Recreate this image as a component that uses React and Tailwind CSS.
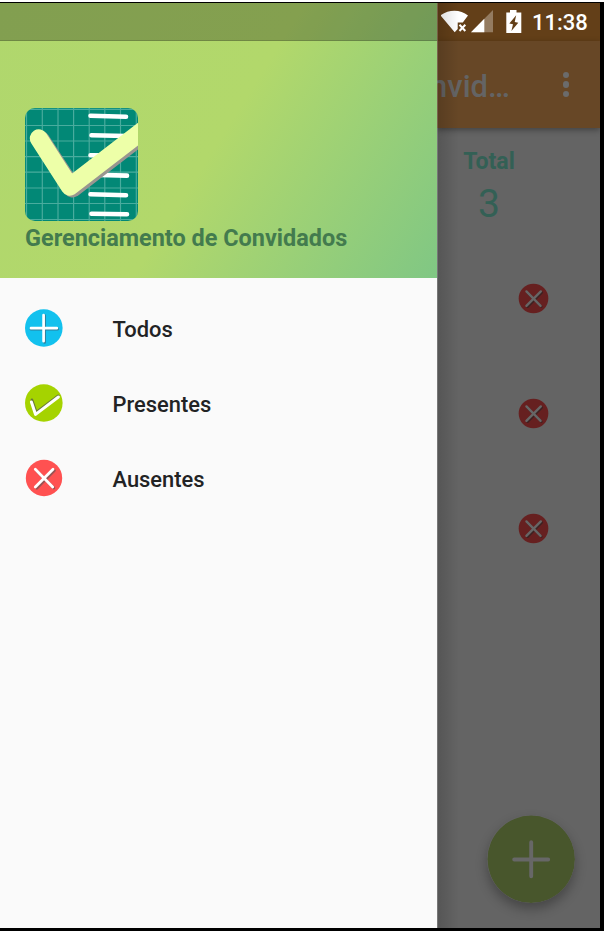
const CloseBadge = ({ className }) => (
  <svg viewBox="0 0 38 38" className={className}>
    <circle cx="19" cy="19" r="18.2" fill="#ff5151" />
    <path d="M11 11.3 28 28.3M28.6 10.8 11 28.4" stroke="#555" strokeOpacity=".6" strokeWidth="2.8" strokeLinecap="round" transform="translate(.8 .8)" />
    <path d="M10.3 10.3 27.7 28M28 10.3 10.3 28" stroke="#fff" strokeWidth="2.8" strokeLinecap="round" />
  </svg>
);

const PlusBadge = () => (
  <svg viewBox="0 0 38 38" className="size-[38px]">
    <circle cx="18.8" cy="19" r="18.8" fill="#12c1ee" />
    <path d="M19.6 6.6V33.4M6 20.2H32.6" stroke="#456" strokeOpacity=".6" strokeWidth="2.7" strokeLinecap="round" />
    <path d="M18.6 6V32.2M6 19.2H31.8" stroke="#fff" strokeWidth="2.7" strokeLinecap="round" />
  </svg>
);

const CheckBadge = () => (
  <svg viewBox="0 0 38 38" className="size-[38px]">
    <circle cx="18.8" cy="19" r="18.8" fill="#a5d300" />
    <path d="M7 15.8 11.3 28.3 33.2 11.8" fill="none" stroke="#58634a" strokeOpacity=".8" strokeWidth="2.6" strokeLinecap="round" strokeLinejoin="round" />
    <path d="M6.4 18 10.6 30.4 33.4 13" fill="none" stroke="#fff" strokeWidth="3" strokeLinecap="round" strokeLinejoin="round" />
  </svg>
);

const Logo = () => (
  <svg viewBox="0 0 113 113" className="block size-[113px] rounded-[10px]">
    <rect width="113" height="113" fill="#028876" />
    <path
      d="M1.5 0V113M17.3 0V113M33 0V113M48.6 0V113M64.2 0V113M79.8 0V113M95.5 0V113M111.3 0V113M0 1.3H113M0 17.5H113M0 33H113M0 48.6H113M0 64.2H113M0 80H113M0 95.5H113M0 111.5H113"
      stroke="#8fd0c5"
      strokeOpacity=".5"
      strokeWidth="1.2"
    />
    <path
      d="M65.5 7.8 101 8.8M66.5 27.3 101 28M65.5 47.3 100 47.6M66 66.7 102 67.6M65.5 86.3 101 87.2M66.5 105.7 102 106.2"
      stroke="#fff"
      strokeWidth="4.6"
      strokeLinecap="round"
    />
    <path d="M15.8 32 47.4 80.5 128 18.5" fill="none" stroke="#999590" strokeWidth="18" strokeLinecap="round" strokeLinejoin="round" />
    <path d="M13.8 30.3 44.8 78.7 126 16" fill="none" stroke="#edffa8" strokeWidth="18" strokeLinecap="round" strokeLinejoin="round" />
  </svg>
);

const StatusIcons = () => (
  <svg viewBox="0 0 84 30" className="h-[30px] w-[84px]">
    <path d="M-.5 5.5C7.500 -1 19.500 -1 27 5.500L21.800 12.500H16.700V19L13.700 22.200Z" fill="#fff" />
    <path d="m18.500 14.700 5.800 6.300m0-6.300-5.800 6.300" stroke="#fff" strokeWidth="2" />
    <path d="M52 0V22.300H30Z" fill="#947b60" />
    <path d="M43.300 8.800V22.300H30Z" fill="#fff" />
    <path d="M69 0H75.500V2.500H80.300V23H65.300V2.500H69Z" fill="#fff" />
    <path d="M75.200 5.200 68.300 13.500 72 14.300 70.400 21 77.300 12.700 73.700 11.900Z" fill="#633f18" />
  </svg>
);

const items = [
  { label: "Todos", icon: <PlusBadge /> },
  { label: "Presentes", icon: <CheckBadge /> },
  { label: "Ausentes", icon: <CloseBadge className="size-[38px]" /> },
];

function Drawer() {
  return (
    <aside className="flex w-[437px] shrink-0 flex-col bg-[#fafafa]">
      <header className="flex h-[275px] flex-col bg-[linear-gradient(122.2deg,#b0d76d_0%,#b2d86b_50%,#80c784_100%)]">
        <div className="h-[38px] shrink-0 border-b border-black/15 bg-black/26" />
        <div className="pl-[25px] pt-[67px]">
          <Logo />
          <h1 className="mt-[3px] whitespace-nowrap text-[23.450px] font-bold leading-[28px] text-[#437b4e]">
            Gerenciamento de Convidados
          </h1>
        </div>
      </header>
      <nav className="pt-[12px]">
        {items.map((item) => (
          <div key={item.label} className="flex h-[75px] items-center pl-[25px]">
            {item.icon}
            <span className="ml-[49.500px] pt-[4px] text-[21.900px] font-medium leading-[26px] text-[#222324]">{item.label}</span>
          </div>
        ))}
      </nav>
    </aside>
  );
}

function GuestScreen() {
  return (
    <main className="relative flex w-[163px] shrink-0 flex-col overflow-hidden bg-[#646464]">
      <div className="flex h-[38px] shrink-0 items-center bg-[#633f18] pl-[4px]">
        <div className="flex h-full items-start pt-[7px]">
          <StatusIcons />
        </div>
        <span className="ml-[7px] pt-[2px] text-[22px] font-medium leading-[26px] text-white">11:38</span>
      </div>
      <div className="relative flex h-[87px] shrink-0 items-center justify-between bg-[#674726] shadow-[0_2px_6px_rgba(0,0,0,0.35)]">
        <div className="flex w-[73px] justify-end whitespace-nowrap pt-[4px] text-[31px] font-medium leading-[36px] text-[#646464]">
          nvid…
        </div>
        <div className="mr-[31px] flex flex-col gap-[3px]">
          <i className="size-[6.500px] rounded-full bg-[#6b6b6b]" />
          <i className="size-[6.500px] rounded-full bg-[#6b6b6b]" />
          <i className="size-[6.500px] rounded-full bg-[#6b6b6b]" />
        </div>
      </div>
      <div className="flex w-[104px] flex-col items-center pt-[20px] text-[#336055]">
        <span className="text-[23px] font-bold leading-[28px]">Total</span>
        <span className="text-[39px] leading-[56px]">3</span>
      </div>
      <div className="mt-[51px] flex flex-col gap-[84px] pl-[80.700px]">
        <CloseBadge className="size-[31px] brightness-40" />
        <CloseBadge className="size-[31px] brightness-40" />
        <CloseBadge className="size-[31px] brightness-40" />
      </div>
      <svg viewBox="0 0 88 88" className="mb-[25px] ml-[50px] mt-auto size-[88px] rounded-full shadow-[0_6px_12px_rgba(0,0,0,0.3)]">
        <circle cx="44.2" cy="44.300" r="43.700" fill="#48562c" />
        <path d="M44.200 27.300V61.300M27.200 44.500H61.200" stroke="#676767" strokeWidth="3.900" strokeLinecap="round" />
      </svg>
      <div className="absolute inset-y-0 left-0 w-[22px] bg-linear-to-r from-black/15 to-transparent" />
      <div className="absolute inset-y-0 left-0 w-px bg-white/20" />
    </main>
  );
}

export default function App() {
  return (
    <div className="h-[931px] w-[604px] overflow-hidden bg-white pt-[2px] font-[Roboto,sans-serif]">
      <div className="flex h-[929px] bg-black pb-[3px] pt-px">
        <Drawer />
        <GuestScreen />
      </div>
    </div>
  );
}
